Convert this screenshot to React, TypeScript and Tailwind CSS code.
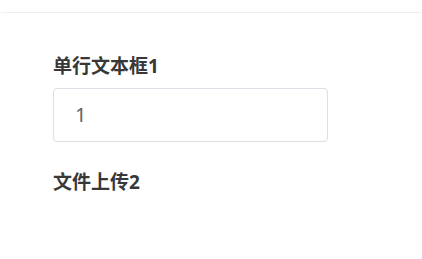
export default function App() {
  return (
    <div className="w-[422px] h-[259px] bg-white overflow-hidden" style={{ fontFamily: '"Noto Sans", "Noto Sans CJK SC", sans-serif' }}>
      <div className="h-[12px]" />
      <div className="mx-[1px] h-[1px] bg-[#eeeeee]" />
      <div className="pl-[53px] pt-[41px]">
        <div className="text-[19px] leading-[24px] font-bold text-[#383838]">单行文本框1</div>
        <div className="mt-[10px] w-[275px] h-[54px] border border-[#dcdfe6] rounded-[4px] flex items-center pl-[21px] text-[20px] text-[#606266]">1</div>
        <div className="mt-[28px] text-[19px] leading-[24px] font-bold text-[#383838]">文件上传2</div>
      </div>
    </div>
  );
}
